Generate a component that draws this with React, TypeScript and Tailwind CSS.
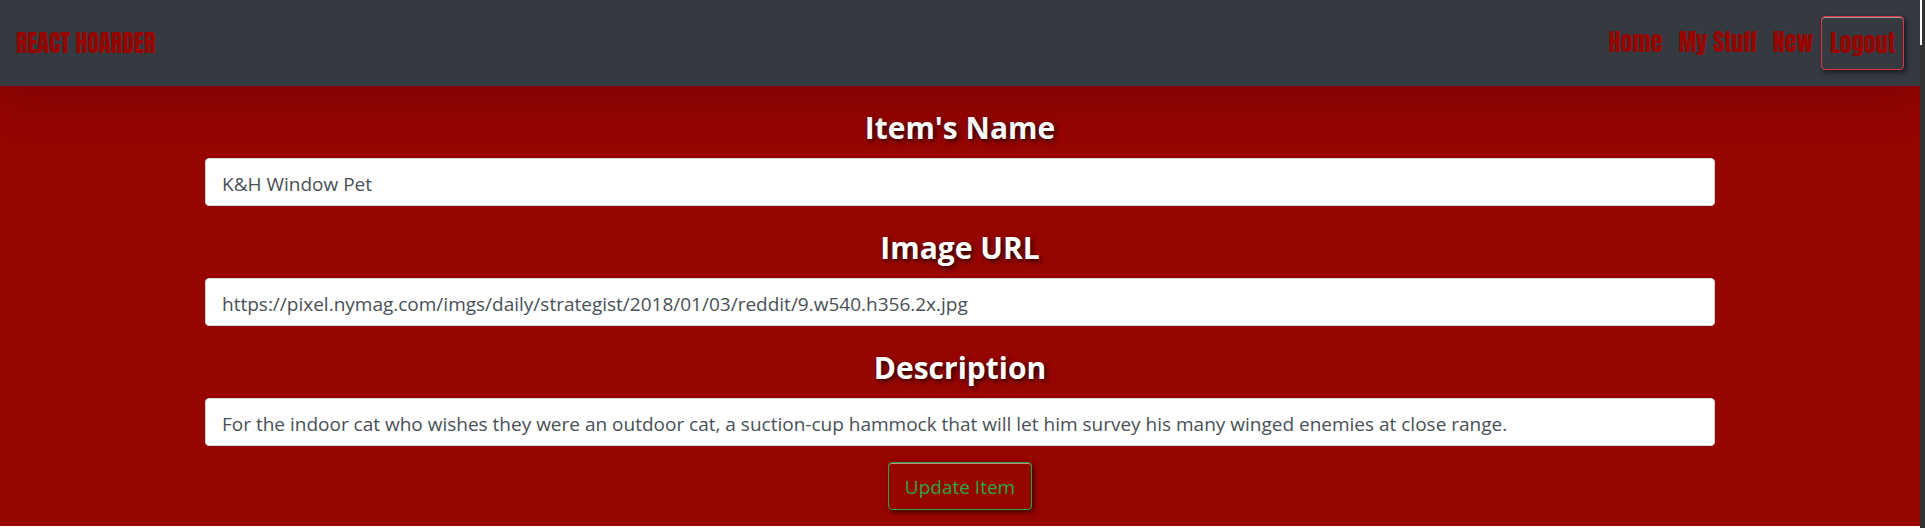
import { useState } from "react";

type Field = { id: string; label: string; value: string };

const initialFields: Field[] = [
  { id: "name", label: "Item's Name", value: "K&H Window Pet" },
  {
    id: "image",
    label: "Image URL",
    value: "https://pixel.nymag.com/imgs/daily/strategist/2018/01/03/reddit/9.w540.h356.2x.jpg",
  },
  {
    id: "description",
    label: "Description",
    value:
      "For the indoor cat who wishes they were an outdoor cat, a suction-cup hammock that will let him survey his many winged enemies at close range.",
  },
];

const links = ["Home", "My Stuff", "New"];

function Navbar() {
  return (
    <nav className="relative z-10 flex items-center justify-between bg-[#343a40] px-4 py-4 font-['Anton','Liberation_Sans_Narrow','Roboto_Condensed',sans-serif] text-2xl font-normal leading-[36px] text-[#970500] shadow-[0_16px_48px_rgba(0,0,0,0.175)]">
      <a href="#home">REACT HOARDER</a>
      <div className="flex items-center">
        {links.map((link) => (
          <a key={link} href={"#" + link} className="px-2 pb-[2px]">
            {link}
          </a>
        ))}
        <button
          type="button"
          className="rounded border border-[#dc3545] px-2 py-2 shadow-[inset_0_1px_0_rgba(255,255,255,0.5),2px_2px_5px_rgba(0,0,0,0.6)]"
        >
          Logout
        </button>
      </div>
    </nav>
  );
}

export default function App() {
  const [fields, setFields] = useState(initialFields);

  const update = (id: string, value: string) =>
    setFields(fields.map((f) => (f.id === id ? { ...f, value } : f)));

  return (
    <div className="flex min-h-screen items-stretch bg-white font-['Segoe_UI','Open_Sans',sans-serif]">
      <div className="min-w-0 flex-1 overflow-hidden">
        <div className="bg-[#970500]">
          <Navbar />
          <form
            className="mx-auto flex w-4/5 flex-col items-center px-[13px] pb-4"
            onSubmit={(e) => e.preventDefault()}
          >
            {fields.map((field) => (
              <div key={field.id} className="w-full">
                <label
                  htmlFor={field.id}
                  className="block pt-[22px] pb-[10px] text-center text-[30px] font-bold leading-[40px] text-white [text-shadow:2px_2px_5px_rgba(0,0,0,0.8)]"
                >
                  {field.label}
                </label>
                <input
                  id={field.id}
                  type="text"
                  value={field.value}
                  onChange={(e) => update(field.id, e.target.value)}
                  className="block h-12 w-full rounded border border-[#ced4da] bg-white px-4 pt-1 text-[19px] text-[#495057] outline-none"
                />
              </div>
            ))}
            <button
              type="submit"
              className="mt-4 h-12 rounded border border-[#28a745] px-4 pt-[2px] text-[19px] text-[#28a745] shadow-[inset_0_1px_0_rgba(255,255,255,0.5),2px_2px_5px_rgba(0,0,0,0.6)]"
            >
              Update Item
            </button>
          </form>
        </div>
      </div>
      <div className="w-[5px] bg-[#333333]">
        <div className="h-[45px] w-[2px] bg-white" />
      </div>
    </div>
  );
}
